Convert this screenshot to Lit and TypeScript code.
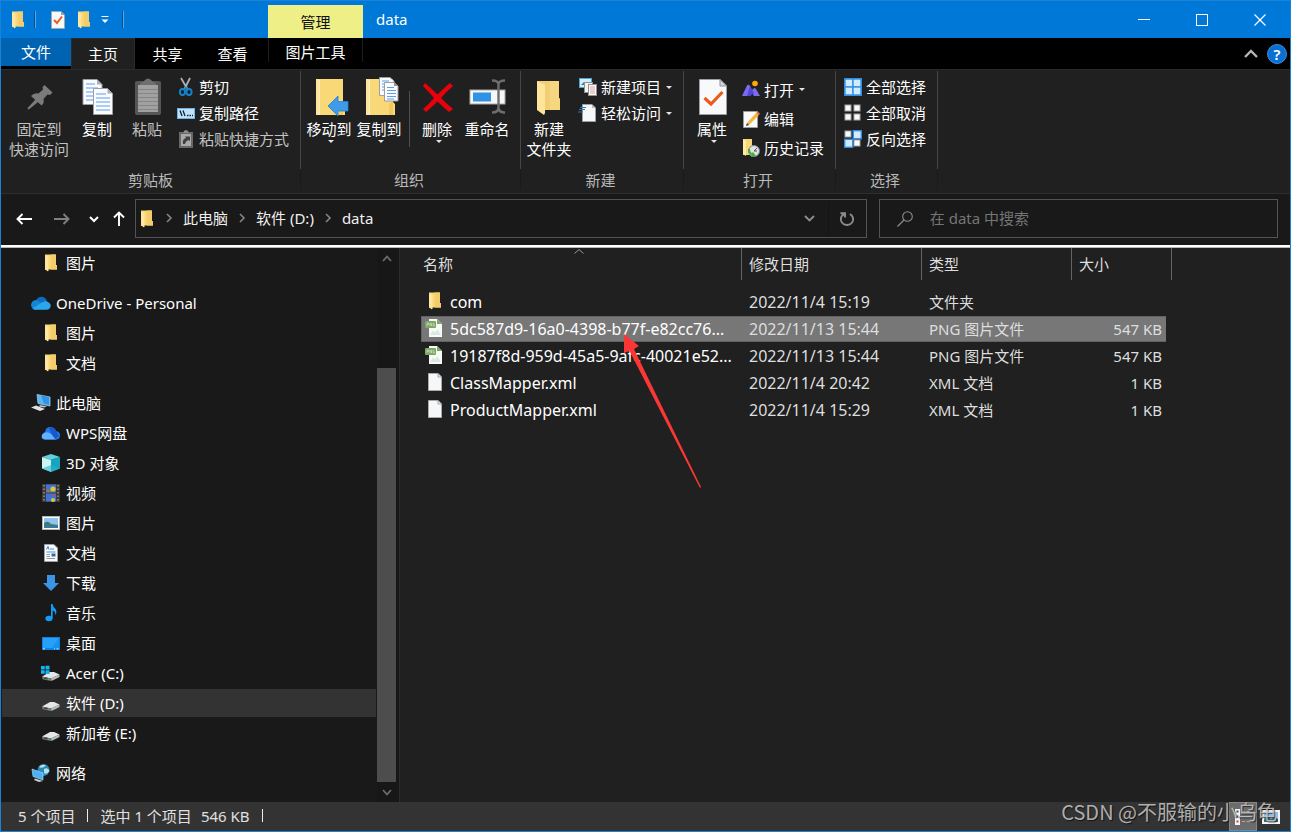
import { LitElement, html, css, svg, TemplateResult } from "lit";
import { customElement, property, state } from "lit/decorators.js";
import { classMap } from "lit/directives/class-map.js";

const icon = (w: number, h: number, body: TemplateResult) =>
  html`<svg width=${w} height=${h} viewBox="0 0 ${w} ${h}" aria-hidden="true">${body}</svg>`;

const caret = (cls = "caret") =>
  html`<svg class=${cls} width="6" height="3" viewBox="0 0 6 3" aria-hidden="true"><path d="M0 0H6L3 3Z" fill="#e4e4e4" /></svg>`;

const folder = icon(18, 18, svg`
  <path d="M4 0.5H14.5Q15 0.5 15 1V11H16V15.5H7L4 16Z" fill="#f8d775" />
  <path d="M10 0.5H15V11H16V15.5H10Z" fill="#f3cd6b" />
  <path d="M4 1L7.5 3V17L6.5 17.3L4 15Z" fill="#ffe6a0" />`);

const checkPage = icon(18, 18, svg`
  <path d="M2.5 0.5H12L15.5 4V17.5H2.5Z" fill="#f7f8fa" stroke="#a3a6aa" />
  <path d="M12 0.5V4H15.5Z" fill="#9da1a6" />
  <path d="M5 9L8 12L13 5.5" fill="none" stroke="#ea5b1c" stroke-width="2" />`);

const drive = svg`
  <path d="M1 12.5L9 8H13L18.5 10.5L10 14.5Z" fill="#e6e6e8" />
  <path d="M1 12.5L10 14.5V17L2.5 15.5Q1 15 1 12.5Z" fill="#77797a" />
  <path d="M10 14.5L18.5 10.5V13L10.5 17Z" fill="#b9bbbd" />
  <path d="M3 13.4L8 14.5V15.7L3.2 14.7Z" fill="#3c3d3e" />
  <rect x="6.5" y="14.4" width="1.6" height="1.4" fill="#43d05a" />`;

const sheet = (x: number, y: number, w: number, h: number, lines: string) => svg`
  <path d="M${x} ${y}H${x + w - 5}L${x + w} ${y + 5}V${y + h}H${x}Z" fill="#fafbfc" stroke="#9b9ea2" />
  <path d="M${x + w - 5} ${y}V${y + 5}H${x + w}Z" fill="#a9adb1" />
  <path d=${lines} stroke="#5f9cf0" stroke-width="1" fill="none" />`;

const largeFolder = (wide: number) => svg`
  <path d="M6 1H${wide}V24L${wide + 2} 26V37H6Z" fill="#f9d877" />
  <path d="M6 1H9V37H6Z" fill="#ffe59b" />
  <path d="M9.5 2V37" stroke="#fff0bd" />
  <path d="M${wide - 4} 26Q${wide} 22 ${wide} 26V37H${wide - 4}Z" fill="#f2c95c" />`;

const pngFile = icon(18, 18, svg`
  <path d="M4 0H12L17 5V18H4Z" fill="#f7faf7" />
  <path d="M12 0V5H17Z" fill="#7ea667" />
  <rect x="0" y="2" width="11" height="7" rx="1" fill="#7ea667" />
  <path d="M2 7V4H3.5V5.6H2M5 7V4L6.5 7V4M9.5 4.4H8V7H9.5V5.6" stroke="#d4e5cb" stroke-width="0.6" fill="none" />
  <path d="M5 16L8 11.5L10 13.5L12.5 10.5L16 16Z" fill="#dbe8e2" />`);

const blankFile = icon(18, 18, svg`
  <path d="M3.5 0.5H13L16.5 4V17.5H3.5Z" fill="#f6f7f9" stroke="#a8abb0" />
  <path d="M13 0.5V4H16.5Z" fill="#fff" stroke="#8e9196" stroke-width="0.8" />`);

const tile = (x: number, y: number, on: boolean) => on
  ? svg`<rect x=${x} y=${y} width="8" height="8" fill="#d4ebff" stroke="#2f8fe6" stroke-width="1.4" />`
  : svg`<rect x=${x + 1} y=${y + 1} width="6" height="6" fill="#fbfbfb" stroke="#a0a3a6" />`;

const icons: Record<string, TemplateResult> = {
  folder,
  checkPage,
  pngFile,
  blankFile,
  pin: icon(38, 38, svg`
    <path d="M24.5 7L32.500 14.500L30 17L27.500 16.500L23.500 21Q24.500 25.500 21.500 27.500L11 18Q14 14.500 18.500 15.500L23 11.500L22.500 9Z" fill="#7b7b7b" />
    <path d="M15.500 21.500L18 24L9.500 31L7.500 31.500L8 29.500Z" fill="#7b7b7b" />`),
  copy: icon(38, 38, svg`
    ${sheet(5, 1.5, 19, 25, "M8 6H17M8 10H20M8 14H20M8 18H20M8 22H16")}
    ${sheet(15.5, 10.5, 19, 26, "M18 16H28M18 20H32M18 24H32M18 28H32M18 32H32")}`),
  paste: icon(38, 38, svg`
    <rect x="7" y="3" width="26" height="34" rx="2" fill="#565656" />
    <rect x="10" y="7" width="20" height="27" fill="#a1a1a1" />
    <path d="M10 11.5H30M10 15.5H30M10 19.5H30M10 23.5H30M10 27.5H30M10 31.5H30" stroke="#858585" />
    <path d="M12 7V5Q16 4 17 2Q20 -1 23 2Q24 4 28 5V7Z" fill="#6f6f6f" />`),
  moveTo: icon(38, 38, svg`
    ${largeFolder(33)}
    <path d="M18 28L28 18V23.500H38V33H28V38Z" fill="#3d9be9" stroke="#2a7fd0" stroke-width="0.8" />`),
  copyTo: icon(38, 38, svg`
    ${largeFolder(33)}
    <g transform="translate(19 -1)">
      <path d="M0.500 0.500H11L15 4V18.500H0.500Z" fill="#fafbfc" stroke="#9b9ea2" />
      <path d="M3 4H10M3 7H10M3 10H6M3 13H6" stroke="#5f9cf0" />
      <path d="M5.500 5.500H15L19 9V24H5.500Z" fill="#fafbfc" stroke="#9b9ea2" />
      <path d="M15 5V9H19Z" fill="#90949a" />
      <path d="M8 10.500H15M8 13.500H17M8 16.500H17M8 19.500H17M8 22H15" stroke="#5f9cf0" />
    </g>`),
  remove: icon(38, 38, svg`
    <path d="M7 5Q13 10 19.500 16.500Q27 9 32 5L35 8Q28 14 23 20Q29 26 35 31L31 34Q25 29 19.500 23.500Q14 29 8 34L5 31Q11 26 16 20Q10 13 5 8Z" fill="#e8000b" />`),
  rename: icon(38, 38, svg`
    <rect x="2" y="12" width="35" height="14" fill="#f7f7f7" stroke="#a7a7a7" />
    <rect x="5" y="14.500" width="18" height="9" fill="#2f92e6" />
    <path d="M24 2.500Q30 2.500 30.500 6Q31 2.500 37 2.500M30.500 5V31M24 34.500Q30 34.500 30.500 30Q31 34.500 37 34.500" fill="none" stroke="#6d6d6d" stroke-width="2.400" />`),
  newFolder: icon(38, 38, svg`
    <path d="M7 3H29V20L30 21V32H7Z" fill="#f2cf74" />
    <path d="M20 3H29V20L30 21V32H20Z" fill="#f6d67f" />
    <path d="M7 3L15 7V35L14 37L7 32Z" fill="#ffe49c" />`),
  properties: icon(38, 38, svg`
    <path d="M6.500 1.500H27L33.500 8V36.500H6.500Z" fill="#f8f9fb" stroke="#9b9ea2" />
    <path d="M27 1.500V8H33.500Z" fill="#d5d8db" stroke="#8f9397" />
    <path d="M11.500 20L18 26L29.500 14" fill="none" stroke="#ee5a18" stroke-width="3.200" />`),
  cut: icon(18, 18, svg`
    <path d="M4 0L11 12M13 0L7 12" stroke="#a9afb5" stroke-width="1.800" />
    <ellipse cx="5.500" cy="14" rx="2.600" ry="3" fill="none" stroke="#1583cc" stroke-width="1.900" />
    <ellipse cx="12" cy="14" rx="2.600" ry="3" fill="none" stroke="#1583cc" stroke-width="1.900" />
    <path d="M8.700 9L7 12.500M8.700 9L10.500 12.500" stroke="#1583cc" stroke-width="1.600" />`),
  copyPath: icon(18, 18, svg`
    <rect x="0.500" y="4.500" width="17" height="10" fill="#c0e2fb" stroke="#6fb4e8" />
    <path d="M3 6.500L5 12M6 6.500L8 12M10 11.500H11.500M12.500 11.500H14M15 11.500H16" stroke="#16202a" stroke-width="1.300" />`),
  pasteLink: icon(18, 18, svg`
    <rect x="2" y="2" width="14" height="16" fill="#686868" />
    <rect x="4" y="4" width="10" height="12" fill="#a9a9a9" />
    <path d="M6 3Q7 0 9 0Q11 0 12 3Z" fill="#8b8b8b" />
    <path d="M6 14Q5 9 9 8L8 6.500H13V11L11.500 10Q8.500 11 8 14Z" fill="#414141" />`),
  newItem: icon(18, 18, svg`
    <rect x="0.500" y="0.500" width="12" height="9" fill="#d7ebfb" stroke="#4aa6d8" />
    <path d="M2 7L5 4L7 7Z" fill="#2e8b6a" />
    <rect x="5.500" y="4.500" width="8" height="10" fill="#f3f3f3" stroke="#909090" />
    <rect x="9.500" y="6.500" width="8" height="11" fill="#fafafa" stroke="#909090" />
    <path d="M11 9H16M11 11H16M11 13H16M11 15H16" stroke="#d88a86" stroke-width="0.800" />`),
  easyAccess: icon(18, 18, svg`
    <path d="M3.500 0.500H13L16.500 4V17.500H3.500Z" fill="#f6f7f9" stroke="#9c9fa3" />
    <path d="M13 0.500V4H16.500Z" fill="#b8bcc0" />
    <path d="M1 3.500H7M0 5.500H6M-1 8H4" stroke="#2878b8" stroke-width="1.200" />`),
  open: icon(18, 18, svg`
    <path d="M0 15L5 4.500Q6.500 3 8 5L10 9L11.500 7.500Q13 6.500 14 8L18 15H12L10 12L8 15Z" fill="#7a6cf0" />
    <path d="M8 5L12.500 13L10.500 13L8 15H5Z" fill="#5546d8" />
    <circle cx="13" cy="2.500" r="2.800" fill="#ffab00" />`),
  edit: icon(18, 18, svg`
    <path d="M1.500 1.500H15.500V17.500H1.500Z" fill="#fafafa" stroke="#9b9ea2" />
    <path d="M4 16L5 13L14 3L17 5L7 15Z" fill="#f4b73c" />
    <path d="M14 3L15.500 1.500L18 3.500L17 5Z" fill="#e46b67" />
    <path d="M4 16L5 13L7 15Z" fill="#444" />`),
  history: icon(18, 18, svg`
    <path d="M1 0H10V6L12 8V16H1Z" fill="#f7d675" />
    <path d="M1 0L4 2V17L1 15Z" fill="#ffe9a8" />
    <circle cx="12" cy="12" r="5.500" fill="#dfe3e3" stroke="#7c8282" />
    <path d="M12 12L15 9M12 12H15" stroke="#555" />
    <path d="M6 10Q6 15 10 16L8.500 18L14 17L11 13L10 14Q8 13 8 10Z" fill="#3fb23f" />`),
  selectAll: icon(18, 18, svg`<rect width="18" height="18" fill="#2f8fe6" />${tile(1, 1, true)}${tile(9, 1, true)}${tile(1, 9, true)}${tile(9, 9, true)}`),
  selectNone: icon(18, 18, svg`${tile(0, 0, false)}${tile(9, 0, false)}${tile(0, 9, false)}${tile(9, 9, false)}`),
  invert: icon(18, 18, svg`${tile(0, 0, false)}${tile(9.300, 0.700, true)}${tile(0.700, 9.300, true)}${tile(9, 9, false)}`),
  oneDrive: icon(20, 18, svg`
    <path d="M5 6Q8 1.500 12 3Q15.500 4 16 8L9 12Z" fill="#0f6cbd" />
    <path d="M5 6Q0.500 6.500 0 11Q0.500 15.500 5 15.700L13 10Z" fill="#1585d8" />
    <path d="M10 9Q15 5.500 18.500 9Q20.500 11 19.500 13Q18.500 15.700 16 15.700H4.500Q2.500 15.700 1.500 14.500Z" fill="#2ba5ee" />`),
  pc: icon(20, 18, svg`
    <path d="M6 0.500L19 3V12L7 9.500Z" fill="#5bb6f2" stroke="#9fc4dc" stroke-width="0.800" />
    <path d="M10 1.500L18 3V11L13 9.500Z" fill="#2f95e4" />
    <path d="M9 11L16 12.500L13 13.500L8 12.500Z" fill="#c5cbd0" />
    <path d="M0 13.500L5 11.500L14 15L9 17Z" fill="#dfe3e7" />`),
  wps: icon(20, 18, svg`
    <path d="M1 14.500Q-0.500 10 4 8Q5 2.500 10 3Q14 3.500 15 7Q19.500 8 19 12Q18.500 15.500 15 15.500H4Q2 15.500 1 14.500Z" fill="#2675ec" />
    <path d="M3 9Q8 7 11 11L15 15.500H4Q0 14.500 1 11Z" fill="#5fb2ff" />
    <path d="M8 3.300Q13 2.500 15 7L18 12L14 15Q9 8 8 3.300Z" fill="#1559cf" />`),
  cube: icon(20, 18, svg`
    <path d="M1 3L10 0L19 3L10 6Z" fill="#5fd0dc" />
    <path d="M1 3L10 6V18L1 14.500Z" fill="#c9f4f3" />
    <path d="M19 3L10 6V18L19 14.500Z" fill="#14a5bf" />
    <path d="M10 11L19 14.500L10 18L1 14.500Z" fill="#2fb3c4" opacity="0.600" />`),
  video: icon(20, 18, svg`
    <rect x="1" width="18" height="18" fill="#3a3a3a" />
    <path d="M3 1V18M17 1V18" stroke="#9a9a9a" stroke-width="1.400" stroke-dasharray="1.500 2" />
    <rect x="5" y="0.500" width="10" height="8" fill="#3f74d6" />
    <rect x="5" y="9.500" width="10" height="8" fill="#3f74d6" />
    <circle cx="12" cy="5" r="2.600" fill="#e9c22d" /><circle cx="7" cy="7" r="1.600" fill="#e8562c" />
    <circle cx="12" cy="16" r="2" fill="#e9c22d" /><path d="M5 8H10V6Z" fill="#4aa04b" />
    <path d="M10 10H14V12Z" fill="#d94b2c" />`),
  picture: icon(20, 18, svg`
    <rect x="1.500" y="2.500" width="17" height="13" fill="#fff" stroke="#b3b6b9" />
    <rect x="3" y="4" width="14" height="10" fill="#8fc4ef" />
    <path d="M3 9Q7 6 10 10L17 11V14H3Z" fill="#3c7c74" />
    <path d="M3 12L17 12.500V14H3Z" fill="#3d77ad" />`),
  document: icon(20, 18, svg`
    <path d="M3.500 0.500H13L16.500 4V17.500H3.500Z" fill="#f8f9fa" stroke="#9c9fa3" />
    <path d="M5.500 5.500L7 2.500L8 5.500" stroke="#2c83d4" fill="none" />
    <path d="M9 5H13M5.500 8H14.500" stroke="#3f98de" />
    <path d="M5.500 10.500H9M5.500 12.500H9M5.500 14.500H14" stroke="#92989e" />
    <rect x="10.500" y="9.500" width="4" height="3" fill="#2f6ea6" />`),
  download: icon(20, 18, svg`<path d="M6 1H14V9H18L10 17L2 9H6Z" fill="#3b94e6" />`),
  music: icon(20, 18, svg`
    <ellipse cx="8" cy="14.500" rx="3.600" ry="2.800" fill="#149cf5" />
    <path d="M10 0H11.500Q12 3 14.500 5Q16.500 8 14 11.500Q15 7.500 11.700 6.500V14H10Z" fill="#149cf5" />`),
  desktop: icon(20, 18, svg`
    <rect x="1" y="3" width="18" height="13" fill="#1382de" />
    <path d="M2 4H18L12 14H2Z" fill="#26a0f8" /><path d="M18 4V14H11Z" fill="#1593f0" />
    <path d="M2 14.800H4M13 14.800H14M15.500 14.800H17.500" stroke="#fff" stroke-width="0.800" />`),
  systemDrive: icon(20, 18, svg`
    ${drive}
    <path d="M0 2H3.700V5.500H0ZM4.500 1.800H8.500V5.500H4.500ZM0 6.300H3.700V9.800H0ZM4.500 6.300H8.500V10H4.500Z" fill="#12b6f2" />`),
  drive: icon(20, 18, svg`<g>${drive}</g>`),
  network: icon(20, 18, svg`
    <circle cx="12.500" cy="6" r="6" fill="#2d87b5" />
    <path d="M8 3Q11 -0.500 15 1.500Q11 5 8 3M13 5Q17 3 18.500 7Q16 11 13 9Z" fill="#b5e0ea" />
    <path d="M1 5L12 9V16L2 12.500Z" fill="#4bb2f5" stroke="#9ed2f3" stroke-width="0.700" />
    <path d="M4 14.500L12 17L8 18L3 16Z" fill="#c8ced3" />`),
};

interface NavEntry { label: string; icon: string; level: 0 | 1; gap?: boolean; current?: boolean; }
interface FileEntry { name: string; date: string; kind: string; size: string; icon: string; }

const navEntries: NavEntry[] = [
  { label: "图片", icon: "folder", level: 1 },
  { label: "OneDrive - Personal", icon: "oneDrive", level: 0, gap: true },
  { label: "图片", icon: "folder", level: 1 },
  { label: "文档", icon: "folder", level: 1 },
  { label: "此电脑", icon: "pc", level: 0, gap: true },
  { label: "WPS网盘", icon: "wps", level: 1 },
  { label: "3D 对象", icon: "cube", level: 1 },
  { label: "视频", icon: "video", level: 1 },
  { label: "图片", icon: "picture", level: 1 },
  { label: "文档", icon: "document", level: 1 },
  { label: "下载", icon: "download", level: 1 },
  { label: "音乐", icon: "music", level: 1 },
  { label: "桌面", icon: "desktop", level: 1 },
  { label: "Acer (C:)", icon: "systemDrive", level: 1 },
  { label: "软件 (D:)", icon: "drive", level: 1, current: true },
  { label: "新加卷 (E:)", icon: "drive", level: 1 },
  { label: "网络", icon: "network", level: 0, gap: true },
];

const files: FileEntry[] = [
  { name: "com", date: "2022/11/4 15:19", kind: "文件夹", size: "", icon: "folder" },
  { name: "5dc587d9-16a0-4398-b77f-e82cc76...", date: "2022/11/13 15:44", kind: "PNG 图片文件", size: "547 KB", icon: "pngFile" },
  { name: "19187f8d-959d-45a5-9afc-40021e52...", date: "2022/11/13 15:44", kind: "PNG 图片文件", size: "547 KB", icon: "pngFile" },
  { name: "ClassMapper.xml", date: "2022/11/4 20:42", kind: "XML 文档", size: "1 KB", icon: "blankFile" },
  { name: "ProductMapper.xml", date: "2022/11/4 15:29", kind: "XML 文档", size: "1 KB", icon: "blankFile" },
];

const reset = css`
  :host, * { box-sizing: border-box; }
  button, input {
    font: inherit; color: inherit; background: none; border: 0; padding: 0; margin: 0;
    border-radius: 0; outline: 0;
  }
  a { color: inherit; text-decoration: none; }
  svg { display: block; flex: none; overflow: visible; }
`;

@customElement("title-bar")
class TitleBar extends LitElement {
  static styles = [reset, css`
    :host { display: block; }
    .bar { display: flex; height: 37px; background: #0078d7; color: #fff; }
    .quick { width: 267px; display: flex; align-items: center; padding-left: 6px; }
    .quick button { display: grid; place-items: center; width: 25px; height: 26px; }
    .quick .first { width: 20px; }
    .rule { width: 2px; height: 17px; background: #0a4f8c; border-right: 1px solid #5ba7e6; margin: 0 9px 0 7px; }
    .context { width: 95px; margin-top: 4px; background: #eeef86; color: #111; display: grid; place-items: center; line-height: 20px; }
    .title { flex: 1; padding: 8px 13px 0; line-height: 20px; }
    .controls { display: flex; padding-right: 1px; }
    .controls button { width: 58px; display: grid; place-items: center; }
  `];
  render() {
    return html`<header class="bar">
      <div class="quick">
        <button class="first" aria-label="窗口菜单">${icons.folder}</button>
        <span class="rule"></span>
        <button aria-label="属性">${icons.checkPage}</button>
        <button aria-label="新建文件夹">${icons.folder}</button>
        <button class="first" aria-label="自定义快速访问工具栏">
          <svg width="8" height="8" viewBox="0 0 8 8"><path d="M0.500 0.500H7.500" stroke="#fff" /><path d="M0.500 3.500H7.500L4 7Z" fill="#fff" /></svg>
        </button>
        <span class="rule"></span>
      </div>
      <div class="context">管理</div>
      <div class="title">data</div>
      <div class="controls">
        <button aria-label="最小化"><svg width="12" height="12"><path d="M0 5.500H12" stroke="#fff" /></svg></button>
        <button aria-label="最大化"><svg width="12" height="12"><rect x="0.500" y="0.500" width="11" height="11" fill="none" stroke="#fff" /></svg></button>
        <button aria-label="关闭"><svg width="12" height="12"><path d="M0.500 0.500L11.500 11.500M11.500 0.500L0.500 11.500" stroke="#fff" stroke-width="1.200" /></svg></button>
      </div>
    </header>`;
  }
}

@customElement("ribbon-tabs")
class RibbonTabs extends LitElement {
  static styles = [reset, css`
    :host { display: block; }
    .tabs { display: flex; height: 31px; background: #000; color: #fff; line-height: 20px; }
    .tab { width: 65px; }
    .file { width: 70px; height: 28px; background: #0063b1; }
    .home { width: 64px; background: #202020; border: 1px solid #2b2b2b; border-bottom: 0; }
    .tool { width: 95px; height: 24px; padding-top: 4px; margin-left: 3px; border: solid #1e1e1e; border-width: 0 1px; }
    .end { margin-left: auto; display: flex; align-items: center; gap: 9px; padding: 0 3px 0 0; }
    .help { width: 20px; height: 20px; border-radius: 50%; background: #0a6fd0; color: #fff; border: 1px solid #3a8ddb; font-size: 15px; line-height: 18px; font-weight: 600; }
  `];
  render() {
    return html`<nav class="tabs">
      <button class="tab file">文件</button>
      <button class="tab home">主页</button>
      <button class="tab">共享</button>
      <button class="tab">查看</button>
      <button class="tab tool">图片工具</button>
      <div class="end">
        <button aria-label="折叠功能区"><svg width="14" height="9" viewBox="0 0 14 9"><path d="M1 8L7 2L13 8" fill="none" stroke="#b5b5b5" stroke-width="2.400" /></svg></button>
        <button class="help" aria-label="帮助">?</button>
      </div>
    </nav>`;
  }
}

@customElement("ribbon-bar")
class RibbonBar extends LitElement {
  static styles = [reset, css`
    :host { display: block; }
    .ribbon { display: flex; height: 125px; background: #202020; border-top: 1px solid #2b2b2b; border-bottom: 1px solid #2d2d2d; color: #fff; line-height: 20px; }
    .group { display: grid; grid-template-rows: 99px 23px; border-right: 1px solid; border-image: linear-gradient(#202020 2px, #464646 2px, #464646 98px, #1a1a1a 98px, #1a1a1a 119px, #202020 119px) 1; }
    .items { display: flex; padding: 4px 0 0 3px; }
    .label { text-align: center; color: #b9b9b9; padding: 1px 3px 0 0; }
    .clip { width: 300px; } .organize { width: 220px; } .create { width: 163px; }
    .access { width: 152px; } .select { width: 102px; }
    .clip .label { padding-right: 0; }
    .big { width: 50px; height: 92px; padding-top: 4px; display: flex; flex-direction: column; align-items: center; white-space: nowrap; }
    .big .text { margin-top: 3px; }
    .pin { width: 68px; padding-left: 2px; }
    .dim { color: #c2c2c2; }
    .caret { margin: 1px 0 0 3px; }
    .rule { width: 1px; height: 56px; background: #4e4e4e; margin: 17px 2px 0 5px; }
    .stack { margin-left: 5px; }
    .small { display: flex; align-items: center; gap: 4px; height: 26px; white-space: nowrap; }
    .tall .small { height: 29px; }
    .tall { padding-top: 1px; }
    .side { margin-left: 1px; }
  `];
  private big(name: string, lines: string[], opts: { menu?: boolean; cls?: string } = {}) {
    return html`<button class="big ${opts.cls ?? ""}">${icons[name]}<span class="text">${lines[0]}${lines[1] ? html`<br />${lines[1]}` : ""}</span>${opts.menu ? caret() : ""}</button>`;
  }
  private small(name: string, text: string, menu = false, cls = "") {
    return html`<button class="small ${cls}">${icons[name]}<span>${text}</span>${menu ? caret("side") : ""}</button>`;
  }
  render() {
    return html`<section class="ribbon">
      <div class="group clip">
        <div class="items">
          ${this.big("pin", ["固定到", "快速访问"], { cls: "pin dim" })}
          ${this.big("copy", ["复制"])}
          ${this.big("paste", ["粘贴"], { cls: "dim" })}
          <div class="stack">
            ${this.small("cut", "剪切")}
            ${this.small("copyPath", "复制路径")}
            ${this.small("pasteLink", "粘贴快捷方式", false, "dim")}
          </div>
        </div>
        <div class="label">剪贴板</div>
      </div>
      <div class="group organize">
        <div class="items">
          ${this.big("moveTo", ["移动到"], { menu: true })}
          ${this.big("copyTo", ["复制到"], { menu: true })}
          <span class="rule"></span>
          ${this.big("remove", ["删除"], { menu: true })}
          ${this.big("rename", ["重命名"])}
        </div>
        <div class="label">组织</div>
      </div>
      <div class="group create">
        <div class="items">
          ${this.big("newFolder", ["新建", "文件夹"])}
          <div class="stack">
            ${this.small("newItem", "新建项目", true)}
            ${this.small("easyAccess", "轻松访问", true)}
          </div>
        </div>
        <div class="label">新建</div>
      </div>
      <div class="group access">
        <div class="items">
          ${this.big("properties", ["属性"], { menu: true })}
          <div class="stack tall">
            ${this.small("open", "打开", true)}
            ${this.small("edit", "编辑")}
            ${this.small("history", "历史记录")}
          </div>
        </div>
        <div class="label">打开</div>
      </div>
      <div class="group select">
        <div class="items">
          <div class="stack">
            ${this.small("selectAll", "全部选择")}
            ${this.small("selectNone", "全部取消")}
            ${this.small("invert", "反向选择")}
          </div>
        </div>
        <div class="label">选择</div>
      </div>
    </section>`;
  }
}

@customElement("address-row")
class AddressRow extends LitElement {
  static styles = [reset, css`
    :host { display: block; }
    .row { display: flex; height: 51px; background: #191919; color: #fff; padding: 5px 12px 7px 0; line-height: 20px; }
    .nav { width: 134px; display: flex; align-items: center; padding-left: 4px; }
    .nav button { display: grid; place-items: center; width: 38px; height: 30px; }
    .nav .slim { width: 25px; }
    .fields { flex: 1; display: grid; grid-template-columns: 11fr 6fr; gap: 12px; }
    .path, .search { border: 1px solid #535353; display: flex; align-items: center; min-width: 0; color: #f0f0f0; }
    .path { padding-left: 1px; }
    .crumbs { flex: 1; display: flex; align-items: center; gap: 11px; padding: 0 0 2px 11px; }
    .end { width: 37px; height: 36px; display: grid; place-items: center; }
    .menu { border-right: 1px solid #141414; }
    .glass { width: 50px; display: grid; place-items: center; }
    .search input { flex: 1; min-width: 0; padding-bottom: 2px; }
    .search input::placeholder { color: #757575; opacity: 1; }
  `];
  render() {
    const chevron = html`<svg width="6" height="10" viewBox="0 0 6 10"><path d="M1 1L5 5L1 9" fill="none" stroke="#858585" stroke-width="1.600" /></svg>`;
    return html`<div class="row">
      <div class="nav">
        <button aria-label="后退"><svg width="16" height="12" viewBox="0 0 16 12"><path d="M16 6H1M6.500 1L1.500 6L6.500 11" fill="none" stroke="#fff" stroke-width="1.900" /></svg></button>
        <button aria-label="前进"><svg width="16" height="12" viewBox="0 0 16 12"><path d="M0 6H15M9.500 1L14.500 6L9.500 11" fill="none" stroke="#808080" stroke-width="1.900" /></svg></button>
        <button class="slim" aria-label="最近浏览的位置"><svg width="10" height="6" viewBox="0 0 10 6"><path d="M1 1L5 5L9 1" fill="none" stroke="#fff" stroke-width="2" /></svg></button>
        <button class="slim" aria-label="上移"><svg width="12" height="15" viewBox="0 0 12 15"><path d="M6 15V1M1 6.500L6 1.500L11 6.500" fill="none" stroke="#fff" stroke-width="1.900" /></svg></button>
      </div>
      <div class="fields">
        <div class="path">
          ${icons.folder}
          <div class="crumbs">
            ${chevron}<a href="#pc">此电脑</a>${chevron}<a href="#d">软件 (D:)</a>${chevron}<a href="#data">data</a>
          </div>
          <button class="end menu" aria-label="以前的位置"><svg width="11" height="7" viewBox="0 0 11 7"><path d="M1 1L5.500 5.500L10 1" fill="none" stroke="#8d8d8d" stroke-width="1.900" /></svg></button>
          <button class="end" aria-label="刷新"><svg width="14" height="14" viewBox="0 0 14 14"><path d="M0.500 1.200H5V5.500M4.600 1.800Q0 4 1 8.500Q2.500 13 7 13Q11.500 13 13 8.500Q13.700 4.500 10 2" fill="none" stroke="#8d8d8d" stroke-width="1.900" /></svg></button>
        </div>
        <div class="search">
          <label class="glass" for="query" aria-label="搜索"><svg width="16" height="16" viewBox="0 0 16 16"><circle cx="10.500" cy="5.500" r="4.800" fill="none" stroke="#8b8b8b" stroke-width="1.100" /><path d="M7 9L0.500 15.500" stroke="#8b8b8b" stroke-width="1.200" /></svg></label>
          <input id="query" type="text" placeholder="在 data 中搜索" />
        </div>
      </div>
    </div>`;
  }
}

@customElement("nav-pane")
class NavPane extends LitElement {
  static styles = [reset, css`
    :host { display: flex; width: 399px; background: #191919; color: #fff; border-right: 1px solid #2b2b2b; }
    .list { flex: 1; min-width: 0; margin: 0; padding: 0; list-style: none; overflow: hidden; }
    .item { padding: 1px; }
    .entry { display: flex; align-items: center; height: 28px; padding-left: 39px; gap: 5px; line-height: 20px; white-space: nowrap; }
    .top { padding-left: 29px; }
    .glyph { width: 20px; display: grid; align-items: center; justify-items: start; }
    .gap { padding-top: 11px; }
    .current { background: #333; }
    .scroll { width: 22px; background: #171717; display: flex; flex-direction: column; padding-right: 3px; }
    .scroll button { height: 20px; display: grid; place-items: center; }
    .before { flex: 100; } .thumb { flex: 413; background: #4d4d4d; }
  `];
  render() {
    return html`<ul class="list">
      ${navEntries.map(e => html`<li class=${classMap({ item: true, gap: !!e.gap })}>
        <a href="#" class=${classMap({ entry: true, top: e.level === 0, current: !!e.current })}><span class="glyph">${icons[e.icon]}</span>${e.label}</a>
      </li>`)}
    </ul>
    <div class="scroll">
      <button aria-label="向上滚动"><svg width="10" height="7" viewBox="0 0 10 7"><path d="M1 6L5 1.500L9 6" fill="none" stroke="#6c6c6c" stroke-width="1.800" /></svg></button>
      <span class="before"></span>
      <span class="thumb"></span>
      <button aria-label="向下滚动"><svg width="10" height="7" viewBox="0 0 10 7"><path d="M1 1L5 5.500L9 1" fill="none" stroke="#6c6c6c" stroke-width="1.800" /></svg></button>
    </div>`;
  }
}

@customElement("file-list")
class FileList extends LitElement {
  @property({ type: Number }) selected = 1;
  static styles = [reset, css`
    :host { display: block; position: relative; flex: 1; min-width: 0; background: #202020; color: #dedede; padding-left: 21px; overflow: hidden; }
    .table { display: block; line-height: 20px; }
    .line { display: grid; grid-template-columns: 321px 180px 150px 94px; height: 27px; width: max-content; cursor: default; }
    .head .line { height: 32px; grid-template-columns: 321px 180px 150px 100px; }
    .head { display: block; margin-bottom: 9px; }
    .body { display: block; }
    th { font-weight: 400; text-align: left; padding: 6px 0 0 7px; border-right: 1px solid #636363; position: relative; }
    th.name { padding-left: 2px; }
    td { padding: 3px 0 0 7px; white-space: nowrap; }
    td.name { display: flex; align-items: flex-start; gap: 7px; padding-left: 4px; color: #fff; }
    td.name, td.date { font-size: 16px; }
    td.size { text-align: right; padding-right: 4px; }
    .selected { background: #777; box-shadow: inset 0 1px #636363, inset 0 -1px #636363, inset 1px 0 #636363; height: 26px; margin-bottom: 1px; }
    .sort { position: absolute; top: 1px; left: calc(50% - 7px); }
    .pointer { position: absolute; left: 224px; top: 86px; }
  `];
  render() {
    return html`<table class="table">
      <thead class="head"><tr class="line">
        <th class="name" scope="col">名称<svg class="sort" width="10" height="5" viewBox="0 0 10 5"><path d="M0.500 4.500L5 0.500L9.500 4.500" fill="none" stroke="#9a9a9a" /></svg></th>
        <th scope="col">修改日期</th><th scope="col">类型</th><th scope="col">大小</th>
      </tr></thead>
      <tbody class="body">
        ${files.map((f, i) => html`<tr class=${classMap({ line: true, selected: i === this.selected })} @click=${() => (this.selected = i)}>
          <td class="name">${icons[f.icon]}<span>${f.name}</span></td>
          <td class="date">${f.date}</td><td>${f.kind}</td><td class="size">${f.size}</td>
        </tr>`)}
      </tbody>
    </table>
    <svg class="pointer" width="77" height="154" viewBox="0 0 77 154" aria-hidden="true"><path d="M0 0L15 12L10 15L77 153L76 154L5.500 17L0 19Z" fill="#fb3736" /></svg>`;
  }
}

@customElement("status-bar")
class StatusBar extends LitElement {
  static styles = [reset, css`
    :host { display: block; }
    .bar { position: relative; display: flex; height: 29px; background: #333; color: #e0e0e0; line-height: 20px; }
    .info { display: flex; align-items: center; padding: 0 0 2px 17px; }
    .rule { width: 1px; height: 13px; background: #eee; margin: 0 12px; }
    .size { margin-left: 9px; }
    .views { margin-left: auto; display: flex; padding-right: 5px; }
    .view { width: 28px; display: grid; place-items: center; }
    .on { background: #6c6c6c; border: 1px solid #858585; }
    .mark { position: absolute; right: 13px; top: -4px; font: 20px/28px "Noto Sans CJK SC", sans-serif; color: rgba(200, 200, 200, 0.85); text-shadow: 1px 1px 1px rgba(0, 0, 0, 0.6); pointer-events: none; white-space: nowrap; }
  `];
  render() {
    return html`<footer class="bar">
      <div class="info"><span>5 个项目</span><span class="rule"></span><span>选中 1 个项目</span><span class="size">546 KB</span><span class="rule"></span></div>
      <div class="views">
        <button class="view on" aria-label="详细信息"><svg width="16" height="16" viewBox="0 0 16 16">
          <rect x="0" y="0" width="5" height="16" fill="#f4f4f4" /><path d="M1.500 2.500H3.500M1.500 7.500H3.500" stroke="#33506e" stroke-width="2" /><path d="M1.500 12.500H3.500" stroke="#c8452e" stroke-width="2" />
          <path d="M7 2.500H10M11.500 2.500H15M7 7.500H10M11.500 7.500H15M7 12.500H10M11.500 12.500H15" stroke="#a8a8a8" /></svg></button>
        <button class="view" aria-label="大图标"><svg width="18" height="14" viewBox="0 0 18 14">
          <rect width="18" height="14" fill="#f4f4f4" /><rect x="2" y="2" width="14" height="10" fill="#8fbfee" /><path d="M2 12V9L6 6L9 9L12 7L16 9V12Z" fill="#3d6a72" /></svg></button>
      </div>
      <span class="mark">CSDN @不服输的小乌龟</span>
    </footer>`;
  }
}

@customElement("app-root")
class AppRoot extends LitElement {
  @state() private selected = 1;
  static styles = css`
    :host { display: block; font: 15px/20px "Noto Sans", "Noto Sans CJK SC", sans-serif; }
    .window { box-sizing: border-box; height: 100vh; display: flex; flex-direction: column; border: 1px solid #1883d7; background: #202020; }
    .edge { height: 3px; background: #fff; border-bottom: 1px solid #b8b8b8; box-sizing: border-box; flex: none; }
    .main { flex: 1; min-height: 0; display: flex; }
  `;
  render() {
    return html`<div class="window">
      <title-bar></title-bar>
      <ribbon-tabs></ribbon-tabs>
      <ribbon-bar></ribbon-bar>
      <address-row></address-row>
      <div class="edge"></div>
      <div class="main"><nav-pane></nav-pane><file-list .selected=${this.selected}></file-list></div>
      <status-bar></status-bar>
    </div>`;
  }
}
